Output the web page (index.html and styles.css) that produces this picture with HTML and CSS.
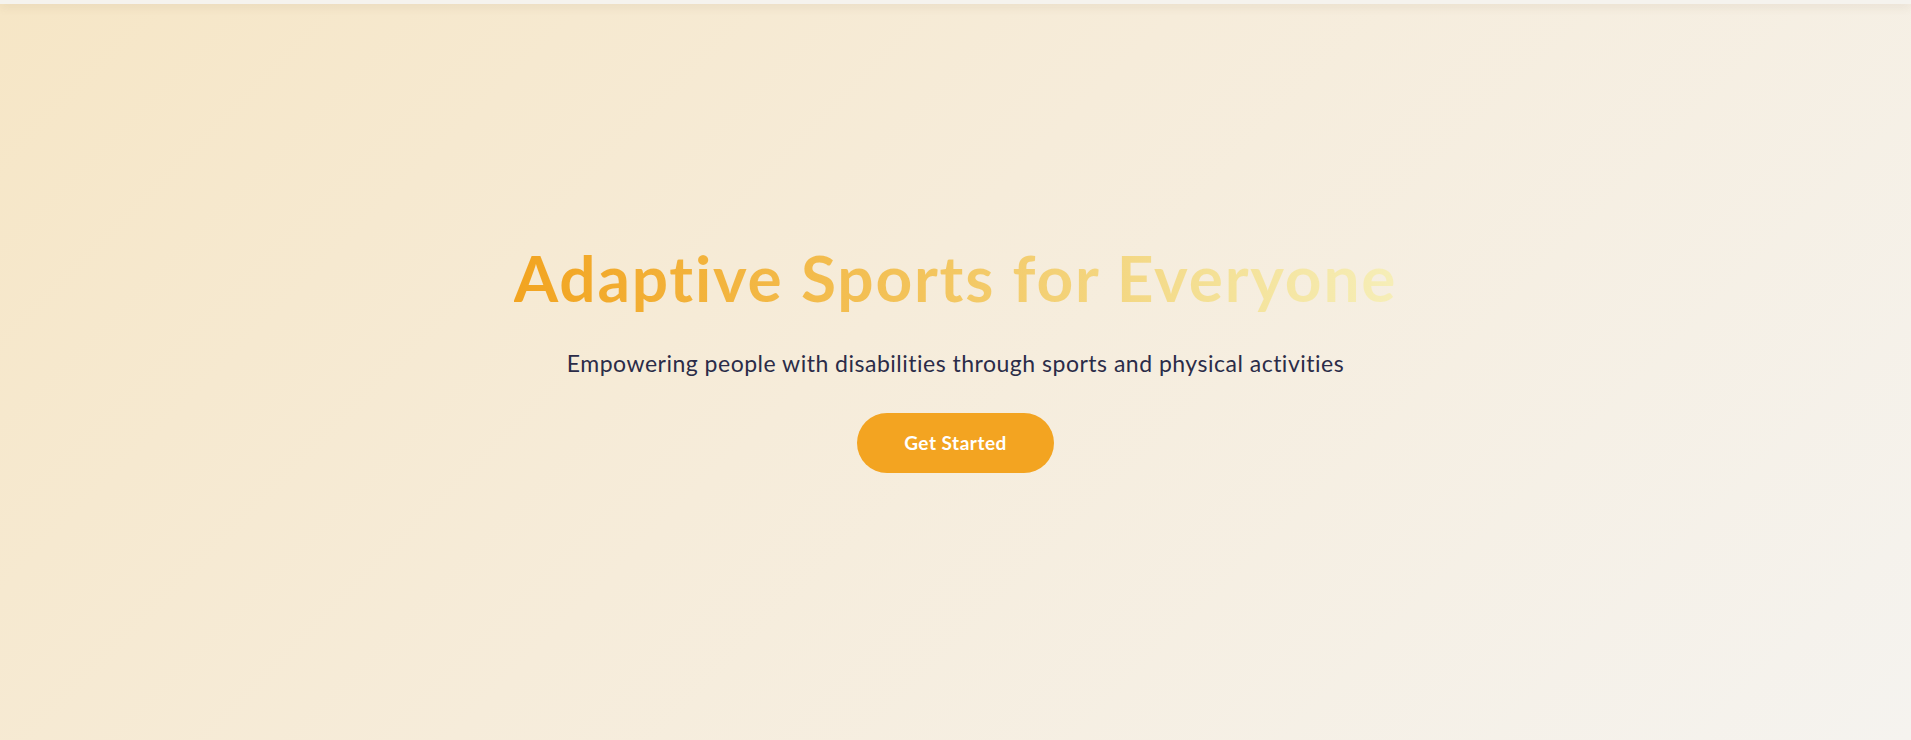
FILE: index.html
```html
<!DOCTYPE html>
<html lang="en">
<head>
<meta charset="utf-8">
<title>Adaptive Sports for Everyone</title>
<link rel="stylesheet" href="styles.css">
</head>
<body>
<header class="site-header"></header>
<main>
  <section class="hero">
    <h1 class="hero-title">Adaptive Sports for Everyone</h1>
    <p class="hero-sub">Empowering people with disabilities through sports and physical activities</p>
    <a class="hero-btn" href="#programs">Get Started</a>
  </section>
  <section class="more" id="programs"></section>
</main>
</body>
</html>
```

FILE: styles.css
```css
html::-webkit-scrollbar { width: 1px; }
html::-webkit-scrollbar-track { background: #f5f2ea; }
html::-webkit-scrollbar-thumb { background: #f3a421; }

* { box-sizing: border-box; }

body {
  margin: 0;
  font-family: Lato, "Open Sans", sans-serif;
  font-variant-ligatures: none;
  background: #f5f2ea;
}

.site-header {
  position: fixed;
  top: 0;
  left: 0;
  right: 0;
  height: 4px;
  background: #f5f3ee;
  box-shadow: 0 2px 10px rgba(120, 100, 60, 0.18);
  z-index: 10;
}

.hero {
  min-height: 740px;
  display: flex;
  flex-direction: column;
  align-items: center;
  justify-content: center;
  background: linear-gradient(135deg, #f6e6c6 0%, #f6ecda 45%, #f5f3ef 100%);
  text-align: center;
  padding-bottom: 27px;
}

.hero-title {
  display: inline-block;
  margin: 0 0 31px;
  font-size: 64px;
  font-weight: 700;
  letter-spacing: 1.8px;
  line-height: 1.2;
  background: linear-gradient(90deg, #f2a420 0%, #f3c35a 45%, #f4e197 80%, #f6eeb8 100%);
  -webkit-background-clip: text;
  background-clip: text;
  color: transparent;
}

.hero-sub {
  margin: 0 0 34px;
  font-size: 23px;
  letter-spacing: 0.5px;
  line-height: 1.36;
  color: #2b2c48;
}

.hero-btn {
  display: inline-block;
  width: 197px;
  height: 60px;
  line-height: 60px;
  border-radius: 30px;
  background: #f3a421;
  color: #fff;
  font-weight: 700;
  font-size: 19px;
  letter-spacing: 0.5px;
  text-decoration: none;
}

.more {
  height: 4905px;
  background: #f5f2ea;
}
```
